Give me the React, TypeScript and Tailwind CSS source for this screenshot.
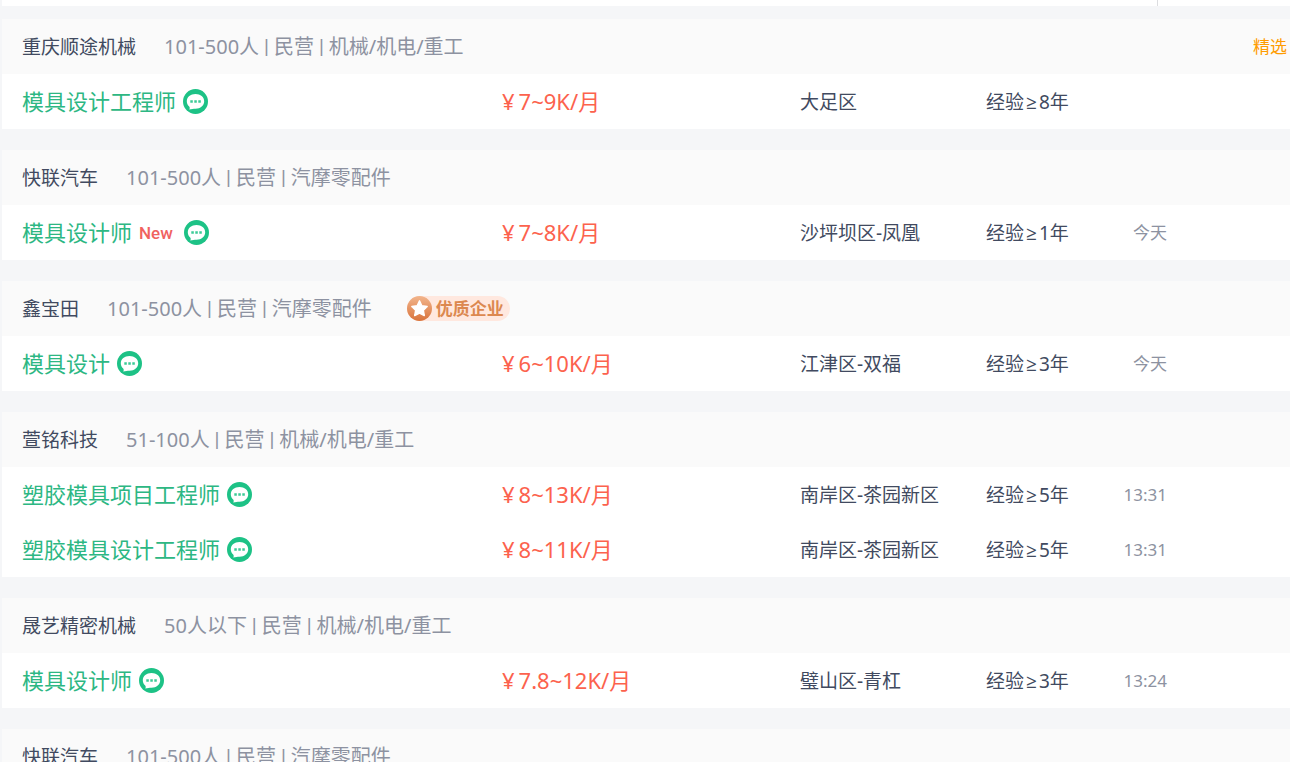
import React from 'react'

interface Job {
    title: string
    isNew?: boolean
    salary: string
    area: string
    years: number
    date?: string
}

interface Company {
    name: string
    meta: string[]
    quality?: boolean
    featured?: boolean
    jobs: Job[]
}

const COMPANIES: Company[] = [
    {
        name: '重庆顺途机械',
        meta: ['101-500人', '民营', '机械/机电/重工'],
        featured: true,
        jobs: [{ title: '模具设计工程师', salary: '7~9K/月', area: '大足区', years: 8 }],
    },
    {
        name: '快联汽车',
        meta: ['101-500人', '民营', '汽摩零配件'],
        jobs: [{ title: '模具设计师', isNew: true, salary: '7~8K/月', area: '沙坪坝区-凤凰', years: 1, date: '今天' }],
    },
    {
        name: '鑫宝田',
        meta: ['101-500人', '民营', '汽摩零配件'],
        quality: true,
        jobs: [{ title: '模具设计', salary: '6~10K/月', area: '江津区-双福', years: 3, date: '今天' }],
    },
    {
        name: '萱铭科技',
        meta: ['51-100人', '民营', '机械/机电/重工'],
        jobs: [
            { title: '塑胶模具项目工程师', salary: '8~13K/月', area: '南岸区-茶园新区', years: 5, date: '13:31' },
            { title: '塑胶模具设计工程师', salary: '8~11K/月', area: '南岸区-茶园新区', years: 5, date: '13:31' },
        ],
    },
    {
        name: '晟艺精密机械',
        meta: ['50人以下', '民营', '机械/机电/重工'],
        jobs: [{ title: '模具设计师', salary: '7.8~12K/月', area: '璧山区-青杠', years: 3, date: '13:24' }],
    },
    {
        name: '快联汽车',
        meta: ['101-500人', '民营', '汽摩零配件'],
        jobs: [],
    },
]

const ChatIcon: React.FC = () => (
    <svg viewBox="0 0 25 25" className="size-[25px] shrink-0" aria-hidden="true">
        <circle cx="12.5" cy="12.5" r="12.5" fill="#1dc286" />
        <path
            d="M12.5 5c5 0 8.700 3 8.700 7.200s-3.700 7.500-8.700 7.500c-1.100 0-2 .1-3 .2-1.100.2-2 .5-3.300.5.700-.9.700-1.900 0-3-1.500-1.300-2.400-3-2.400-5.200C3.800 8 7.500 5 12.500 5z"
            fill="#fff"
        />
        <path d="M7.300 11.300h2.500v2.400H7.300zM11.300 11.300h2.500v2.400h-2.500zM15.300 11.300h2.500v2.400h-2.500z" fill="#3ccb97" />
    </svg>
)

const QualityBadge: React.FC = () => (
    <span className="ml-[35px] flex h-[25px] items-center gap-1 rounded-full bg-[#ffe8df] pr-1.5 text-[17px] font-bold text-[#dc8850]">
        <svg viewBox="0 0 25 25" className="size-[25px]" aria-hidden="true">
            <defs>
                <linearGradient id="medal" x1="0" y1="0" x2="0" y2="1">
                    <stop offset="0" stopColor="#f2b58c" />
                    <stop offset="1" stopColor="#d9743c" />
                </linearGradient>
            </defs>
            <circle cx="12.5" cy="12.5" r="12.5" fill="url(#medal)" />
            <path
                d="M12.500 4.800l2.400 4.900 5.300.8-3.800 3.800.9 5.300-4.800-2.500-4.800 2.500.9-5.300-3.800-3.800 5.300-.8z"
                fill="#fff"
                stroke="#fff"
                strokeWidth="1.400"
                strokeLinejoin="round"
            />
        </svg>
        优质企业
    </span>
)

const CompanyBlock: React.FC<{ company: Company }> = ({ company }) => (
    <section className="bg-white">
        <header className="flex h-[55px] items-center bg-[#fafafa] pr-[3px] pl-5">
            <h2>
                <a href="#company" className="text-[#414a60]">{company.name}</a>
            </h2>
            <p className="ml-7 text-xl text-[#8d92a1]">
                {company.meta.map((item, i) => (
                    <React.Fragment key={item}>
                        {i > 0 && <span className="font-['Roboto']"> | </span>}
                        {item}
                    </React.Fragment>
                ))}
            </p>
            {company.quality && <QualityBadge />}
            {company.featured && <span className="ml-auto text-[17px] text-[#ff9c00]">精选</span>}
        </header>

        {company.jobs.length > 0 && (
            <table className="w-full table-fixed">
                <colgroup>
                    <col className="w-[500px]" />
                    <col className="w-[298px]" />
                    <col className="w-[186px]" />
                    <col className="w-[120px]" />
                    <col className="w-[61px]" />
                    <col />
                </colgroup>
                <tbody>
                    {company.jobs.map((job) => (
                        <tr key={job.title} className="h-[55px] text-[#414a60]">
                            <td className="pl-5">
                                <div className="flex items-center gap-[7px]">
                                    <a href="#job" className="pb-0.5 text-[22px] text-[#2db783]">{job.title}</a>
                                    {job.isNew && (
                                        <span className="mr-1 font-['Roboto'] text-[17px] font-medium text-[#f0625f]">New</span>
                                    )}
                                    <button type="button" aria-label="聊一聊">
                                        <ChatIcon />
                                    </button>
                                </div>
                            </td>
                            <td className="pb-0.5 text-[22px] text-[#fc624d]">
                                <span className="mr-1">¥</span>{job.salary}
                            </td>
                            <td>{job.area}</td>
                            <td>
                                经验<span className="px-0.5 font-['Open_Sans']">≥</span>{job.years}年
                            </td>
                            <td className="text-right text-[17px] text-[#8d92a1]">{job.date}</td>
                            <td />
                        </tr>
                    ))}
                </tbody>
            </table>
        )}
    </section>
)

export default function App() {
    return (
        <main className="h-screen overflow-hidden bg-[#f5f6f8] pl-0.5 font-['Noto_Sans','Noto_Sans_CJK_SC',sans-serif] text-[19px] leading-7 whitespace-nowrap">
            {/* Tail of the toolbar above the list */}
            <div className="mb-[13px] flex h-1.5 justify-end bg-white">
                <div className="w-[133px] border-l border-[#dcdde0]" />
            </div>
            <div className="flex flex-col gap-[21px]">
                {COMPANIES.map((company, i) => (
                    <CompanyBlock key={i} company={company} />
                ))}
            </div>
        </main>
    )
}
